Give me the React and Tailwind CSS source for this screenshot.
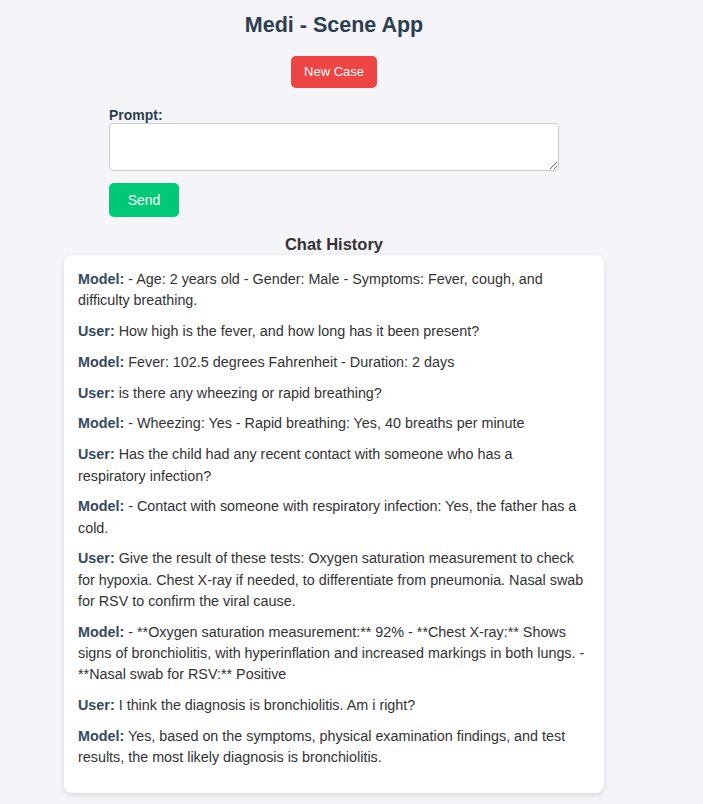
import { useState } from 'react';

const messages = [
    { role: 'Model', text: '- Age: 2 years old - Gender: Male - Symptoms: Fever, cough, and difficulty breathing.' },
    { role: 'User', text: 'How high is the fever, and how long has it been present?' },
    { role: 'Model', text: 'Fever: 102.5 degrees Fahrenheit - Duration: 2 days' },
    { role: 'User', text: 'is there any wheezing or rapid breathing?' },
    { role: 'Model', text: '- Wheezing: Yes - Rapid breathing: Yes, 40 breaths per minute' },
    { role: 'User', text: 'Has the child had any recent contact with someone who has a\nrespiratory infection?' },
    { role: 'Model', text: '- Contact with someone with respiratory infection: Yes, the father has a cold.' },
    { role: 'User', text: 'Give the result of these tests: Oxygen saturation measurement to check for hypoxia. Chest X-ray if needed, to differentiate from pneumonia. Nasal swab for RSV to confirm the viral cause.' },
    { role: 'Model', text: '- **Oxygen saturation measurement:** 92% - **Chest X-ray:** Shows signs of bronchiolitis, with hyperinflation and increased markings in both lungs. - **Nasal swab for RSV:** Positive' },
    { role: 'User', text: 'I think the diagnosis is bronchiolitis. Am i right?' },
    { role: 'Model', text: 'Yes, based on the symptoms, physical examination findings, and test results, the most likely diagnosis is bronchiolitis.' },
];

const App = () => {
    const [prompt, setPrompt] = useState('');

    return (
        <div className="min-h-screen bg-[#f4f4f9] font-['Liberation_Sans',Arial,sans-serif] text-[#333]">
            <div className="w-[668px] flex flex-col items-center pt-[13px] pb-[12px]">
                <h1 className="text-[21.5px] leading-[25px] font-bold text-[#2c3e50]">Medi - Scene App</h1>

                <button className="mt-[18px] h-[32px] px-[13px] rounded-[5px] bg-[#ef4444] text-white text-[13px]">
                    New Case
                </button>

                {/* Prompt form */}
                <div className="w-[450px] mt-[19px]">
                    <label className="block text-[14px] leading-[16px] font-bold text-[#2c3e50]">Prompt:</label>
                    <textarea
                        value={prompt}
                        onChange={(e) => setPrompt(e.target.value)}
                        className="block w-full h-[48px] border border-[#ccc] rounded-[4px] bg-white p-2 text-[14px]"
                    />
                    <button className="mt-[12px] w-[70px] h-[34px] rounded-[5px] bg-[#00c975] text-white text-[14px]">
                        Send
                    </button>
                </div>

                <h2 className="mt-[17px] text-[16.5px] leading-[20px] font-bold text-[#333]">Chat History</h2>

                {/* Chat history */}
                <div className="mt-px w-[540px] bg-white rounded-[8px] shadow-[0_2px_5px_rgba(0,0,0,0.12)] pt-[14px] pl-[14px] pr-[17px] pb-[15px]">
                    {messages.map((m, i) => (
                        <p key={i} className="mb-[9.5px] text-[14.35px] leading-[21.3px] whitespace-pre-line">
                            <strong className="text-[#34495e]">{m.role}:</strong> {m.text}
                        </p>
                    ))}
                </div>
            </div>
        </div>
    );
};

export default App;
